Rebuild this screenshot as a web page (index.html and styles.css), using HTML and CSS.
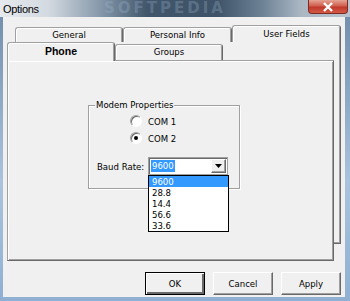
FILE: index.html
```html
<!DOCTYPE html>
<html lang="en">

<head>
    <meta charset="UTF-8">
    <title>Options</title>
    <link rel="stylesheet" href="styles.css">
</head>

<body>
    <div class="window">

        <div class="titlebar">
            <span class="title">Options</span>
            <span class="watermark">SOFTPEDIA</span>
            <span class="close">
                <svg width="14" height="10" viewBox="0 0 14 10">
                    <path d="M3 1 L11 9 M11 1 L3 9" stroke="#fff" stroke-width="2.4" fill="none" />
                </svg>
            </span>
        </div>

        <div class="client">

            <div class="tabctl">
                <div class="backpage"></div>

                <div class="tabrow back">
                    <div class="tab">General</div>
                    <div class="tab wide">Personal Info</div>
                    <div class="tab wide sel">User Fields</div>
                </div>

                <div class="tabrow front">
                    <div class="tab sel phone">Phone</div>
                    <div class="tab">Groups</div>
                </div>

                <div class="page">
                    <div class="group">
                        <span class="caption">Modem Properties</span>

                        <div class="radios">
                            <label class="radio"><span class="dot"></span>COM 1</label>
                            <label class="radio"><span class="dot on"></span>COM 2</label>
                        </div>

                        <div class="baud">
                            <span class="baud-label">Baud Rate:</span>
                            <div class="combo">
                                <span class="combo-value">9600</span>
                                <span class="combo-btn">
                                    <svg width="7" height="4" viewBox="0 0 7 4">
                                        <path d="M0 0 H7 L3.5 4 Z" fill="#000" />
                                    </svg>
                                </span>
                                <ul class="droplist">
                                    <li class="hl">9600</li>
                                    <li>28.8</li>
                                    <li>14.4</li>
                                    <li>56.6</li>
                                    <li>33.6</li>
                                </ul>
                            </div>
                        </div>
                    </div>
                </div>
            </div>

            <div class="buttons">
                <button class="btn default">OK</button>
                <button class="btn">Cancel</button>
                <button class="btn">Apply</button>
            </div>

        </div>
    </div>
</body>

</html>
```

FILE: styles.css
```css
* {
    box-sizing: border-box;
}

body {
    margin: 0;
    font-family: "DejaVu Sans Condensed", "Liberation Sans", sans-serif;
    font-stretch: condensed;
    font-size: 9.5px;
    color: #000;
}

.window {
    width: 350px;
    height: 301px;
    padding: 0 5px 4px 3px;
    background: linear-gradient(180deg, #6d8aa8 0%, #a9c3dc 60%, #8fb0d2 100%);
    overflow: hidden;
}

.titlebar {
    position: relative;
    height: 17px;
    margin: 0 -5px 0 -3px;
    background: linear-gradient(90deg, #e6eaee 0%, #d2d9e0 14%, #7f92a5 30%, #42566b 42%, #3e5367 62%, #6e8296 75%, #aab7c3 86%, #b9c4ce 100%);
    display: flex;
    align-items: center;
    overflow: hidden;
}

.title {
    padding-left: 3px;
    font-family: "Liberation Sans", sans-serif;
    font-stretch: normal;
    font-size: 11px;
    letter-spacing: -0.3px;
}

.watermark {
    position: absolute;
    left: 104px;
    top: 0;
    font-family: "DejaVu Sans", sans-serif;
    font-stretch: normal;
    font-weight: bold;
    font-size: 15px;
    line-height: 16px;
    letter-spacing: 3px;
    color: rgba(160, 185, 210, 0.3);
}

.close {
    position: absolute;
    right: 2px;
    top: 0;
    width: 40px;
    height: 14px;
    border: 1px solid #7c2a22;
    border-top: none;
    border-radius: 0 0 4px 4px;
    background: linear-gradient(180deg, #e5a394 0%, #d0604e 45%, #c0392b 55%, #d45a45 100%);
    display: flex;
    align-items: center;
    justify-content: center;
}

.client {
    height: 280px;
    background: #f0f0f0;
    padding-top: 8px;
}

/* tab control */

.tabctl {
    position: relative;
    z-index: 0;
    margin-left: 4px;
    width: 334px;
}

.backpage {
    position: absolute;
    z-index: -1;
    left: 8px;
    top: 17px;
    width: 326px;
    height: 202px;
    border-right: 1px solid #696969;
    border-bottom: 1px solid #696969;
    box-shadow: inset -1px -1px 0 #a0a0a0;
}

.tabrow {
    display: flex;
    align-items: flex-end;
}

.tabrow.back {
    height: 17px;
    margin-left: 8px;
}

.tabrow.front {
    height: 18px;
}

.tab {
    position: relative;
    z-index: 1;
    width: 108px;
    height: 15px;
    border: 1px solid #a0a0a0;
    border-right-color: #696969;
    border-bottom: none;
    border-radius: 3px 3px 0 0;
    background: #f0f0f0;
    box-shadow: inset 1px 1px 0 #fff, inset -1px 0 0 #a0a0a0;
    text-align: center;
    line-height: 14px;
}

.tab.wide {
    width: 109px;
}

.tabrow.front .tab {
    height: 16px;
}

.tab.sel {
    height: 17px;
    line-height: 15px;
}

.tabrow.front .tab.sel {
    height: 19px;
    margin-bottom: -1px;
    z-index: 2;
    line-height: 17px;
}

.phone {
    font-family: "Liberation Sans", sans-serif;
    font-stretch: normal;
    font-weight: bold;
    font-size: 10.5px;
}

.page {
    position: relative;
    width: 327px;
    height: 201px;
    border: 1px solid #a0a0a0;
    border-right-color: #696969;
    border-bottom-color: #696969;
    background: #f0f0f0;
    box-shadow: inset 1px 1px 0 #fff, inset -1px -1px 0 #a0a0a0;
    padding-top: 44px;
    padding-left: 80px;
}

/* group box */

.group {
    position: relative;
    width: 152px;
    height: 84px;
    border: 1px solid #a0a0a0;
    box-shadow: inset 1px 1px 0 #fff, 1px 1px 0 #fff;
}

.caption {
    display: block;
    width: max-content;
    margin: -7px 0 0 6px;
    padding: 0 1px;
    background: #f0f0f0;
    line-height: 12px;
}

.radios {
    display: flex;
    flex-direction: column;
    gap: 5px;
    margin-top: 4px;
    padding-left: 41px;
}

.radio {
    display: flex;
    align-items: center;
    gap: 6px;
    height: 12px;
}

.dot {
    position: relative;
    width: 12px;
    height: 12px;
    border-radius: 50%;
    border: 1px solid;
    border-color: #a0a0a0 #fff #fff #a0a0a0;
    background: #fff;
    box-shadow: inset 1px 1px 0 #696969;
}

.dot.on::after {
    content: "";
    position: absolute;
    left: 3px;
    top: 3px;
    width: 4px;
    height: 4px;
    border-radius: 50%;
    background: #000;
}

.baud {
    display: flex;
    align-items: center;
    margin-top: 13px;
    padding-left: 8px;
    white-space: nowrap;
}

.baud-label {
    width: 51px;
}

.combo {
    position: relative;
    display: flex;
    align-items: center;
    width: 80px;
    height: 18px;
    border: 1px solid #a0a0a0;
    background: #fff;
    box-shadow: inset 1px 1px 0 #696969;
    padding: 0 1px 0 2px;
}

.combo-value {
    height: 12px;
    line-height: 12px;
    background: #3399ff;
    color: #fff;
    padding: 0 1px;
}

.combo-btn {
    margin-left: auto;
    width: 15px;
    height: 14px;
    border: 1px solid;
    border-color: #fff #696969 #696969 #fff;
    background: #f0f0f0;
    box-shadow: inset -1px -1px 0 #a0a0a0;
    display: flex;
    align-items: center;
    justify-content: center;
}

.droplist {
    position: absolute;
    left: -1px;
    top: 17px;
    width: 81px;
    margin: 0;
    padding: 0;
    list-style: none;
    border: 1px solid #000;
    background: #fff;
}

.droplist li {
    height: 11px;
    line-height: 11px;
    padding-left: 3px;
}

.droplist li.hl {
    background: #3399ff;
    color: #fff;
}

/* buttons */

.buttons {
    display: flex;
    justify-content: flex-end;
    gap: 8px;
    margin-top: 11px;
    padding-right: 4px;
}

.btn {
    width: 60px;
    height: 23px;
    padding: 0;
    font: inherit;
    background: #f0f0f0;
    border: 1px solid;
    border-color: #fff #696969 #696969 #fff;
    box-shadow: inset -1px -1px 0 #a0a0a0;
}

.btn.default {
    border: 1px solid #000;
    box-shadow: inset 1px 1px 0 #fff, inset -2px -2px 0 #696969;
}
```
